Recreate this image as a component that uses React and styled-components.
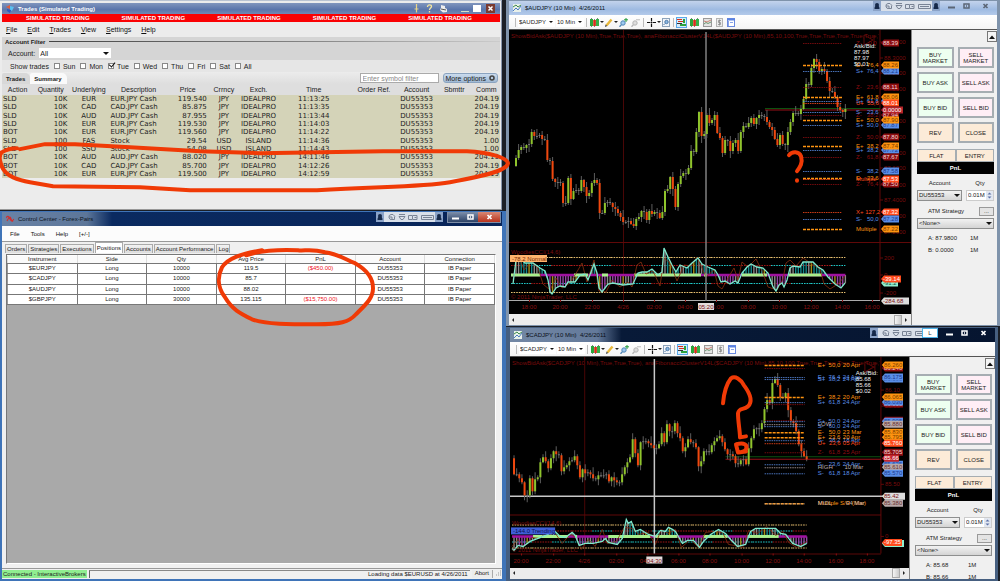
import React from 'react';
import styled, { createGlobalStyle, css } from 'styled-components';

const GlobalStyle = createGlobalStyle`
  * {
    box-sizing: border-box;
  }

  body {
    margin: 0;
    background: #1b1f26;
    font-family: 'Liberation Sans', Arial, sans-serif;
    font-size: 6px;
    color: #222;
  }

  button, input, select {
    font: inherit;
    color: inherit;
    margin: 0;
  }
`;

/* ---------- data ---------- */

const tradeColumns = [
  { name: 'Action', width: 31, align: 'left' },
  { name: 'Quantity', width: 35, align: 'right' },
  { name: 'Underlying', width: 41, align: 'center' },
  { name: 'Description', width: 58, align: 'left' },
  { name: 'Price', width: 40, align: 'right' },
  { name: 'Crrncy', width: 32, align: 'center' },
  { name: 'Exch.', width: 37, align: 'center' },
  { name: 'Time', width: 73, align: 'center' },
  { name: 'Order Ref.', width: 47, align: 'center' },
  { name: 'Account', width: 38, align: 'center' },
  { name: 'Sbmttr', width: 37, align: 'center' },
  { name: 'Comm', width: 27, align: 'right' },
];

const trades = [
  ['SLD', '10K', 'EUR', 'EUR.JPY Cash', '119.540', 'JPY', 'IDEALPRO', '11:13:25', '204.19'],
  ['SLD', '10K', 'CAD', 'CAD.JPY Cash', '85.875', 'JPY', 'IDEALPRO', '11:13:35', '204.19'],
  ['SLD', '10K', 'AUD', 'AUD.JPY Cash', '87.955', 'JPY', 'IDEALPRO', '11:13:44', '204.19'],
  ['SLD', '10K', 'EUR', 'EUR.JPY Cash', '119.530', 'JPY', 'IDEALPRO', '11:14:03', '204.19'],
  ['BOT', '10K', 'EUR', 'EUR.JPY Cash', '119.560', 'JPY', 'IDEALPRO', '11:14:22', '204.19'],
  ['SLD', '100', 'FAS', 'Stock', '29.54', 'USD', 'ISLAND', '11:14:36', '1.00'],
  ['SLD', '100', 'SSO', 'Stock', '54.08', 'USD', 'ISLAND', '11:14:43', '1.00'],
  ['BOT', '10K', 'AUD', 'AUD.JPY Cash', '88.020', 'JPY', 'IDEALPRO', '14:11:46', '204.19'],
  ['BOT', '10K', 'CAD', 'CAD.JPY Cash', '85.700', 'JPY', 'IDEALPRO', '14:12:26', '204.19'],
  ['BOT', '10K', 'EUR', 'EUR.JPY Cash', '119.500', 'JPY', 'IDEALPRO', '14:12:59', '204.19'],
];

const positions = [
  ['$EURJPY', 'Long', '10000', '119.5', '($450.00)', 'DU55353', 'IB Paper'],
  ['$CADJPY', 'Long', '10000', '85.7', '', 'DU55353', 'IB Paper'],
  ['$AUDJPY', 'Long', '10000', '88.02', '', 'DU55353', 'IB Paper'],
  ['$GBPJPY', 'Long', '30000', '135.115', '($15,750.00)', 'DU55353', 'IB Paper'],
];

const ORANGE = '#ff9410';
const BLUE = '#5b8fe8';
const DARK = '#8c0d10';
const RED = '#ff4a1c';
const GREY = '#b9a9a9';

const audChart = {
  symbol: '$AUDJPY',
  box: [509, 30, 402, 284],
  title: 'ShowBidAsk($AUDJPY (10 Min),True,True,True), anaFibonacciClusterV14L($AUDJPY (10 Min),85,10,100,True,True,True,True,True,True,Tru',
  start: 516,
  step: 2.614,
  open: 166,
  closes: [
    158, 150, 147, 148, 145, 144, 132, 136, 136, 135, 139, 140, 160, 161, 179, 182, 182, 183, 203, 203,
    178, 199, 191, 190, 191, 180, 187, 196, 193, 183, 180, 183, 213, 213, 203, 202, 203, 207, 209, 213,
    217, 222, 222, 221, 224, 226, 219, 217, 211, 212, 220, 211, 214, 212, 213, 218, 212, 191, 189, 177,
    189, 207, 184, 176, 173, 174, 168, 151, 152, 132, 112, 136, 134, 115, 123, 120, 115, 133, 138, 153,
    140, 141, 151, 143, 140, 151, 132, 126, 127, 123, 118, 124, 118, 115, 116, 117, 122, 127, 130, 139,
    145, 135, 144, 145, 132, 122, 113, 113, 114, 109, 99, 84, 85, 68, 59, 62, 71, 69, 71, 81, 91, 92, 97,
    107, 110, 112, 109,
  ],
  dayLine: 623,
  split: 242,
  bottom: 300,
  bottomColor: '#aaa',
  cross: { x: 706, y1: 32, y2: 301, color: '#808080', tag: '05:20' },
  tick: 306,
  times: [
    [529, '18:00'], [560, '20:00'], [592, '22:00'], [623, '4/26'], [654, '02:00'], [685, '04:00'],
    [716, '06:00'], [748, '08:00'], [779, '10:00'], [811, '12:00'], [842, '14:00'], [872, '16:00'],
  ],
  axis: [
    [42, '88.4000'], [58, '88.3000'], [73, '88.2000'], [89, '88.1000'], [121, '87.9000'], [137, '87.8000'],
    [153, '87.7000'], [168, '87.6000'], [185, '87.5000'], [200, '87.4000'], [216, '87.3000'],
    [232, '87.2000'], [258, '200'], [275, '0'], [293, '-200'],
  ],
  market: { x: 765, ask: 108, bid: 110 },
  dash: [803, 842],
  labelX: 856,
  levels: [
    [43, DARK, 'Z-    0,0', '', '88.39'],
    [71, BLUE, 'S+  76,4', '', '88.21'],
    [65, ORANGE, 'E+  76,4', '', '88.26'],
    [87, DARK, 'Z-   23,6', '', '88.11'],
    [101, BLUE, 'S+  61,8', '', '88.03'],
    [97, ORANGE, 'E+  61,8', '', '88.06'],
    [103, RED, 'U+  55,6', '', '88.01'],
    [115, DARK, 'Z-   38,2', '', '87.94'],
    [112, BLUE, 'S-   23,6', '', ''],
    [125, BLUE, 'S+  50,0', '', '87.87'],
    [120, ORANGE, 'E+  50,0', '', '87.90'],
    [137, DARK, 'Z-   50,0', '', '87.80'],
    [150, BLUE, 'S+  38,2', '', '87.72'],
    [146, ORANGE, 'E+  38,2', '', '87.74'],
    [157, DARK, 'Z-   61,8', '', '87.67'],
    [171, BLUE, 'S-   38,2', '', '87.58'],
    [184, DARK, 'Z-   76,4', '', '87.50'],
    [178, ORANGE, 'E-   23,6', '', ''],
    [179, RED, 'Multiple', '', '87.53'],
    [212, RED, 'X+ 127,2', '', '87.32'],
    [219, BLUE, 'S-   50,0', '', '87.28'],
    [229, ORANGE, 'Multiple', '', '87.22'],
  ],
  quote: { x: 854, y: 46, rows: ['Ask/Bid:', '87.98', '87.97', '$0.01'] },
  tags: [
    [110, '0.0000', '#b5222a', '#fff', 19],
    [283, '-91.2', '#8ff0d0', '#145040', 14],
    [279, '-39.14', RED, '#fff', 17],
    [301, '-284.68', '#ddd', '#7a1010', 25],
  ],
  cci: {
    name: 'WoodiesCCI(14,6)',
    nameY: 254,
    badge: ['-78.2 Normal', 255, '#ffb46e', '#7a2a00', 37],
    copyY: 299,
    mid: 275,
    rows: [257, 265, 283, 292],
    line: [
      [513, 284], [516, 260], [519, 257], [525, 263], [533, 263], [540, 268], [545, 271], [548, 280], [550, 292],
      [552, 294], [556, 288], [560, 286], [565, 287], [568, 282], [575, 282], [580, 275], [585, 274], [588, 280],
      [594, 264], [597, 273], [599, 288], [602, 292], [605, 288], [608, 284], [613, 283], [623, 285], [633, 284],
      [638, 273], [642, 272], [647, 272], [652, 269], [658, 275], [662, 272], [664, 248], [668, 257], [672, 265],
      [676, 272], [680, 265], [687, 268], [692, 263], [698, 258], [702, 264], [708, 267], [715, 270], [718, 275],
      [721, 282], [725, 281], [730, 284], [735, 281], [738, 283], [742, 273], [747, 267], [751, 264], [757, 267],
      [763, 268], [768, 273], [773, 287], [776, 291], [779, 285], [782, 283], [784, 287], [787, 280], [790, 268],
      [793, 266], [800, 267], [803, 262], [808, 262], [813, 262], [818, 267], [823, 270], [828, 277], [835, 284],
      [841, 288], [845, 283],
    ],
    fast: [
      [513, 280], [518, 254], [524, 270], [531, 262], [538, 268], [543, 284], [550, 290], [556, 278], [562, 288],
      [570, 283], [578, 270], [582, 263], [587, 282], [594, 260], [599, 291], [606, 292], [612, 280], [620, 287],
      [628, 282], [632, 287], [637, 265], [641, 262], [646, 274], [653, 271], [660, 286], [664, 258], [670, 263],
      [677, 281], [684, 265], [691, 266], [697, 257], [706, 277], [714, 270], [718, 286], [722, 289], [728, 278],
      [734, 268], [738, 280], [742, 262], [748, 267], [756, 259], [763, 273], [768, 287], [777, 290], [783, 279],
      [786, 263], [790, 260], [796, 266], [803, 258], [812, 264], [820, 269], [824, 284], [830, 289], [838, 284],
      [845, 276],
    ],
    bands: [[511, 540], [574, 588], [602, 608], [634, 701], [704, 707], [742, 767], [789, 822]],
  },
};

const cadChart = {
  symbol: '$CADJPY',
  box: [510, 356, 398, 210],
  title: 'ShowBidAsk($CADJPY (10 Min),True,True,True), anaFibonacciClusterV14L($CADJPY (10 Min),85,10,100,True,True,True,True,True,True,Tru',
  start: 514,
  step: 2.63,
  open: 457,
  closes: [
    473, 473, 477, 481, 494, 494, 477, 490, 478, 476, 461, 456, 460, 467, 457, 450, 453, 454, 470, 466, 464,
    460, 459, 455, 464, 476, 468, 472, 471, 473, 477, 478, 474, 475, 474, 473, 480, 476, 479, 481, 481, 473,
    466, 461, 456, 438, 452, 464, 441, 440, 440, 442, 444, 447, 447, 443, 432, 441, 423, 430, 430, 422, 432,
    437, 450, 446, 438, 441, 442, 446, 465, 460, 450, 450, 451, 444, 440, 437, 435, 441, 448, 453, 453, 455,
    462, 463, 459, 458, 463, 447, 437, 428, 427, 428, 422, 408, 399, 402, 382, 378, 384, 396, 396, 392, 409,
    420, 422, 430, 443, 450, 455, 458,
  ],
  dayLine: 584,
  split: 513,
  bottom: 552,
  bottomColor: '#5a0808',
  cross: { x: 654, y1: 358, y2: 552, color: '#c8c8c8', tag: '04:30', h: 495 },
  tick: 558,
  times: [
    [521, '20:00'], [553, '22:00'], [584, '4/26'], [616, '02:00'], [647, '04:00'], [678, '06:00'],
    [709, '08:00'], [741, '10:00'], [772, '12:00'], [803, '14:00'], [835, '16:00'], [866, '18:00'],
  ],
  axis: [[389, '86.10'], [405, '86.00'], [483, '85.50'], [535, '0']],
  market: { x: 725, ask: 455, bid: 458 },
  dash: [764, 804],
  labelX: 817,
  levels: [
    [367, DARK, '', '', '86.240'],
    [364, ORANGE, 'E+  50,0', '20 Apr', '86.260'],
    [378, BLUE, 'S+  38,2', '24 Apr', '86.190'],
    [376, BLUE, 'E+  76,4', '24 Apr', '86.175'],
    [403, DARK, '', '', '86.010'],
    [401, BLUE, 'S+  61,8', '24 Apr', '86.030'],
    [396, ORANGE, 'E+  38,2', '20 Apr', '86.065'],
    [419, DARK, '', '', '85.925'],
    [420, BLUE, 'S+  50,0', '24 Apr', '85.905'],
    [425, BLUE, 'S-   60,0', '24 Apr', ''],
    [423, GREY, 'LOW', '', '85.880'],
    [431, ORANGE, 'E-   50,0', '23 Mar', '85.830'],
    [439, BLUE, 'S-   38,2', '18 Apr', ''],
    [436, ORANGE, 'E+  23,6', '20 Apr', '85.795'],
    [442, RED, 'U+  23,6', '05 Apr', '85.760'],
    [451, DARK, 'Z-   61,8', '25 Apr', '85.705'],
    [463, BLUE, 'S-   23,6', '24 Apr', '85.625'],
    [466, GREY, 'HIGH', ' 10 Mar', '85.610'],
    [472, BLUE, 'S-   61,8', '18 Apr', '85.570'],
    [502, ORANGE, 'Multiple S/R (Mar)', '', ''],
    [502, GREY, 'MIDL', '  04 Mar', '85.380'],
  ],
  quote: { x: 855, y: 372, rows: ['Ask/Bid:', '85.68', '85.66', '$0.02'] },
  tags: [
    [457, '85.66', '#c4262e', '#fff', 14],
    [495, '85.42', '#ddd', '#7a1010', 20],
    [542, '', '#8ff0d0', '#145040', 19],
    [541, '-97.35', RED, '#fff', 17],
  ],
  cci: {
    name: 'WoodiesCCI(14,6)',
    nameY: 524,
    badge: ['-144.0 Trending', 526, '#3f5fd8', '#0a0f50', 44],
    copyY: 551,
    mid: 535,
    rows: [523, 529, 540, 546],
    line: [
      [512, 547], [514, 549], [518, 544], [523, 545], [530, 540], [538, 537], [555, 530], [560, 535], [565, 536],
      [572, 531], [575, 534], [579, 544], [585, 542], [593, 542], [602, 540], [605, 537], [608, 541], [617, 543],
      [622, 537], [626, 518], [628, 522], [631, 520], [635, 530], [640, 528], [648, 533], [655, 535], [660, 529],
      [665, 530], [668, 526], [672, 528], [675, 530], [682, 542], [687, 539], [693, 539], [699, 546], [703, 540],
      [710, 533], [718, 528], [725, 532], [730, 538], [737, 545], [745, 543], [750, 530], [755, 527], [760, 527],
      [770, 527], [775, 527], [780, 532], [785, 533], [788, 537], [792, 542], [797, 544], [800, 545], [806, 542],
    ],
    fast: [
      [512, 545], [518, 538], [524, 545], [532, 536], [540, 537], [548, 529], [556, 533], [562, 542], [570, 533],
      [576, 536], [581, 548], [588, 538], [595, 545], [602, 528], [607, 542], [616, 540], [624, 526], [632, 527],
      [638, 533], [648, 531], [655, 543], [661, 528], [668, 532], [675, 528], [681, 546], [690, 538], [698, 546],
      [705, 531], [713, 530], [722, 531], [728, 543], [734, 544], [742, 546], [748, 529], [757, 532], [766, 525],
      [775, 534], [782, 530], [788, 541], [796, 546], [806, 540],
    ],
    bands: [[533, 568], [575, 577], [608, 650], [655, 677], [703, 727], [747, 778]],
  },
};

/* ---------- layout ---------- */

const Desktop = styled.div`
  position: relative;
  display: grid;
  grid-template-columns: 506fr 494fr;
  min-height: 100vh;
  overflow: hidden;
`;

const Column = styled.div`
  display: flex;
  flex-direction: column;
  gap: 1px;
  min-width: 0;
`;

const TitleBar = styled.header`
  display: flex;
  align-items: center;
  gap: 4px;
  flex: none;
  height: ${({ $height }) => $height || 14}px;
  padding: 0 ${({ $right }) => $right || 4}px 0 4px;
  white-space: nowrap;
  ${({ $tone }) => $tone === 'slate' && css`
    color: #fff;
    font-weight: bold;
    background: linear-gradient(#8095bd, #5a75ab 60%, #7188b4);
  `}
  ${({ $tone }) => $tone === 'navy' && css`
    color: #0c1420;
    background: linear-gradient(90deg, #6a83a6 0, #5c7699 17%, #0a2a60 22%, #082458 100%);
  `}
  ${({ $tone }) => $tone === 'night' && css`
    color: #0a0f18;
    background: linear-gradient(90deg, #7388a5 0, #63799a 18%, #081a38 23%, #061530 100%);
  `}
  ${({ $tone }) => $tone === 'light' && css`
    color: #0c1420;
    background: linear-gradient(#c3d3ec, #9fbbe2 60%, #b3caea);
  `}
`;

const TitleText = styled.h1`
  flex: 1;
  margin: 0;
  font-size: 6px;
  font-weight: inherit;
`;

const WindowButtons = styled.div`
  display: flex;
  align-self: flex-start;
  border: ${({ $flat }) => ($flat ? 'none' : '1px solid #7d8da6')};
  border-top: 0;
`;

const WindowButton = styled.button`
  display: flex;
  align-items: center;
  justify-content: center;
  width: ${({ $wide }) => ($wide ? 22 : 15)}px;
  height: 10px;
  padding: 0;
  border: 0;
  color: ${({ $dark }) => ($dark ? '#5b6676' : '#fff')};
  background: ${({ $red, $plain }) => ($red ? 'linear-gradient(#d98874, #b8321c)' : $plain ? 'transparent' : 'linear-gradient(#7d8fab, #2c4266)')};
`;

const Language = styled.span`
  align-self: flex-start;
  width: 16px;
  height: 10px;
  margin-left: -19px;
  border: 1px solid #4fb4e8;
  line-height: 8px;
  text-align: center;
  color: #333;
  background: #fff;
`;

const IconButton = styled.button`
  display: flex;
  align-items: center;
  padding: 0;
  border: 1px solid ${({ $on }) => ($on ? '#5aa9ea' : 'transparent')};
  background: ${({ $on }) => ($on ? '#d8ecfb' : 'none')};
`;

const MenuBar = styled.nav`
  display: flex;
  align-items: center;
  gap: ${({ $gap }) => $gap}px;
  height: 15px;
  padding: 0 ${({ $left }) => $left}px;
  font-size: ${({ $size }) => $size || 6}px;
  background: ${({ $bg }) => $bg};
`;

const MenuItem = styled.a`
  color: #111;
  text-decoration: none;

  &::first-letter {
    text-decoration: ${({ $key }) => ($key ? 'underline' : 'none')};
  }
`;

/* trades window */

const TradesFrame = styled.section`
  margin-right: 4px;
  padding: 2px 1px 31px 2px;
  background: #ececec;
  border-top: 1px solid #b9c3d2;
  border-right: 1px solid #8a97ac;
  border-bottom: 1px solid #999;
`;

const Ticker = styled.div`
  display: flex;
  height: 8px;
  padding-left: 24px;
  gap: 32px;
  overflow: hidden;
  color: #fff;
  background: #fa0204;
  font-weight: bold;
  line-height: 9px;
  white-space: nowrap;

  span {
    flex: none;
  }
`;

const Filter = styled.fieldset`
  margin: 0;
  padding: 0;
  border: 0;
  background: #d5d5d5;
`;

const FilterTitle = styled.div`
  display: flex;
  align-items: center;
  gap: 4px;
  padding-left: 3px;
  height: 9px;
  font-weight: bold;

  &::after {
    content: '';
    flex: 1;
    height: 1px;
    background: linear-gradient(90deg, #444, #888 60%, #ccc);
  }
`;

const FilterRow = styled.div`
  display: flex;
  align-items: center;
  gap: ${({ $gap }) => $gap}px;
  height: ${({ $height }) => $height}px;
  padding-left: ${({ $left }) => $left}px;
  font-size: 7px;
  background: ${({ $bg }) => $bg || 'none'};
`;

const SelectBox = styled.span`
  position: relative;
  display: inline-flex;
  flex: ${({ $grow }) => ($grow ? '1 1 0' : 'none')};
  min-width: 0;

  &::after {
    content: '';
    position: absolute;
    right: 2px;
    top: 50%;
    margin-top: -1px;
    border: ${({ $small }) => ($small ? 2 : 3)}px solid transparent;
    border-top-color: #111;
    border-bottom: 0;
    pointer-events: none;
  }
`;

const Select = styled.select`
  appearance: none;
  width: ${({ $width }) => ($width ? `${$width}px` : '100%')};
  height: ${({ $height }) => $height || 10}px;
  padding: 0 8px 0 1px;
  border: ${({ $plain }) => ($plain ? '0' : '1px solid #8e8f8f')};
  border-radius: 0;
  background: ${({ $plain }) => ($plain ? '#fff' : 'linear-gradient(#f2f2f2, #d4d4d4)')};
`;

const Day = styled.label`
  display: flex;
  align-items: center;
  gap: 3px;
`;

const Check = styled.input`
  appearance: none;
  position: relative;
  width: 6px;
  height: 6px;
  border: 1px solid #888;
  background: #fff;

  &:checked::after {
    content: '';
    position: absolute;
    left: 1px;
    bottom: 1px;
    width: 3px;
    height: 5px;
    border: solid #111;
    border-width: 0 1px 1px 0;
    transform: rotate(40deg);
  }
`;

const TradeTabs = styled.div`
  display: flex;
  align-items: flex-end;
  height: 12px;
  padding-right: 2px;
  background: linear-gradient(#ececec, #dedede);
`;

const TradeTab = styled.button`
  height: 11px;
  padding: 0 5px 0 4px;
  border: 0;
  border-radius: 2px 5px 0 0;
  font-weight: bold;
  background: ${({ $active }) => ($active ? '#d8d8d8' : '#fafafa')};
`;

const TabTools = styled.div`
  display: flex;
  align-items: center;
  gap: 4px;
  margin-left: auto;
  height: 12px;
`;

const SymbolFilter = styled.input`
  width: 79px;
  height: 10px;
  padding: 0 2px;
  border: 1px solid #aaa;
  background: #fff;
  font-size: 7px;

  &::placeholder {
    color: #8a8a8a;
  }
`;

const MoreButton = styled.button`
  display: flex;
  align-items: center;
  gap: 3px;
  height: 10px;
  padding: 0 2px;
  border: 1px solid #8aa3bf;
  border-radius: 3px;
  font-size: 7px;
  background: linear-gradient(#cbdcee, #9fb9d4);
`;

const TradeTable = styled.table`
  width: 100%;
  height: 94px;
  border-collapse: collapse;
  table-layout: fixed;
  font-family: 'DejaVu Sans', Verdana, sans-serif;
  font-size: 7px;
  line-height: 8px;
  white-space: nowrap;

  th {
    height: 11px;
    padding: 0;
    font-family: 'Liberation Sans', Arial, sans-serif;
    font-weight: normal;
    background: #dedede;
  }

  tbody {
    background: #d4d3b8;
  }
`;

const Col = styled.col`
  width: ${({ $width }) => $width}px;
`;

const TradeCell = styled.td`
  padding: 0 1px;
  text-align: ${({ $align }) => $align};
`;

/* control center */

const ControlFrame = styled.section`
  flex: 1;
  display: flex;
  flex-direction: column;
  border: solid #3f74b8;
  border-width: 1px 4px 3px 2px;
  background: #f0f0f0;
`;

const PageTabs = styled.div`
  display: flex;
  align-items: flex-end;
  gap: 1px;
  height: 12px;
  padding-left: 3px;
  border-top: 1px solid #999;
`;

const PageTab = styled.button`
  height: ${({ $active }) => ($active ? 11 : 9)}px;
  padding: 0 1px;
  border: 1px solid #aaa;
  border-bottom: 0;
  background: ${({ $active }) => ($active ? '#fff' : 'linear-gradient(#f2f2f2, #dcdcdc)')};
`;

const GridArea = styled.div`
  flex: 1;
  margin: 1px 6px 4px 4px;
  border: 1px solid #777;
  border-right-color: #fff;
  border-bottom-color: #fff;
  background: #a9a9a9;
`;

const PositionTable = styled.table`
  width: 100%;
  height: 50px;
  border-collapse: collapse;
  table-layout: fixed;
  line-height: 7px;
  text-align: center;
  background: #fff;

  th, td {
    padding: 0;
    font-weight: normal;
    border: 1px solid #777;
    border-left-color: #999;
  }

  th {
    border-color: #fff #ddd #777;
    background: #fafafa;
  }
`;

const Pnl = styled.td`
  color: #f0141e;
`;

const StatusBar = styled.footer`
  display: flex;
  align-items: center;
  gap: 2px;
  height: 11px;
  padding: 1px 0;
  border-top: 1px solid #999;
`;

const Connected = styled.span`
  padding: 0 1px;
  line-height: 8px;
  background: #90ee90;
`;

const Loading = styled.span`
  flex: 1;
  padding-right: 2px;
  border-left: 1px solid #666;
  border-top: 1px solid #888;
  line-height: 7px;
  text-align: right;
`;

const AbortButton = styled.button`
  height: 8px;
  padding: 0 3px;
  border: 0;
  border-right: 1px solid #aaa;
  line-height: 7px;
  background: #ececec;
`;

/* chart windows */

const ChartFrame = styled.section`
  display: flex;
  flex-direction: column;
  flex: ${({ $fill }) => ($fill ? 1 : 'none')};
  margin-right: ${({ $fill }) => ($fill ? 2 : 0)}px;
  border: solid ${({ $fill }) => ($fill ? '#465f80' : '#7f93ab')};
  border-width: 1px 3px ${({ $fill }) => ($fill ? 3 : 1)}px ${({ $fill }) => ($fill ? 4 : 3)}px;
  background: #f0f0f0;
`;

const Toolbar = styled.div`
  display: flex;
  align-items: center;
  flex: none;
  gap: 1px;
  height: 15px;
  padding-left: 5px;
  border-bottom: 1px solid #555;
  background: linear-gradient(#fff, #f4f4f4);

  ${Select} {
    height: 9px;
    padding-right: 8px;
  }
`;

const ToolGroup = styled.div`
  display: flex;
  gap: 2px;
`;

const Divider = styled.span`
  width: 1px;
  height: 9px;
  margin: 0 1px;
  background: #bbb;
`;

const Caret = styled.span`
  margin: 0 -1px;
  border: 2px solid transparent;
  border-top-color: #222;
  border-bottom: 0;
`;

const ChartBody = styled.div`
  display: flex;
  flex: 1;
`;

const ChartMain = styled.div`
  flex: 1;
  min-width: 0;
  display: flex;
  flex-direction: column;
`;

const Plot = styled.svg`
  display: block;
  width: 100%;
  height: auto;
  background: #000;
  font-family: 'Liberation Sans', Arial, sans-serif;
  font-size: 6px;
`;

const ScrollTrack = styled.div`
  display: flex;
  align-items: center;
  justify-content: space-between;
  height: 11px;
  padding: 0 4px 0 3px;
  background: #ececec;
`;

const Thumb = styled.span`
  width: 8px;
  height: 10px;
  margin: 0 3px 0 auto;
  border: 1px solid #aaa;
  background: linear-gradient(90deg, #f4f4f4, #ccc);
`;

const Arrow = styled.span`
  border: 2px solid transparent;
  border-${({ $dir }) => ($dir === 'left' ? 'right' : 'left')}: 2px solid #222;
  border-${({ $dir }) => $dir}: 0;
`;

const OrderPanel = styled.aside`
  contain: size;
  flex: none;
  width: 86px;
  padding: 1px 3px 0 5px;
  overflow: hidden;
  background: #f0f0f0;
  border-left: 1px solid #888;
`;

const CollapseButton = styled.button`
  display: flex;
  align-items: center;
  justify-content: center;
  width: 10px;
  height: 11px;
  margin: 0 -3px 5px auto;
  padding: 0;
  border: 1px solid #777;
  background: #f4f4f4;
`;

const OrderButtons = styled.div`
  display: grid;
  grid-template-columns: 1fr 1fr;
  gap: 4px;
`;

const tints = {
  buy: '#edfff0',
  sell: '#ffeef6',
  exit: '#fcebd8',
};

const OrderButton = styled.button`
  height: ${({ $low }) => ($low ? 13 : 21)}px;
  padding: 0 1px;
  border: ${({ $low }) => ($low ? 1 : 2)}px solid #a6adb2;
  line-height: 6px;
  background: ${({ $tint }) => tints[$tint]};
`;

const ExitRow = styled.div`
  display: grid;
  grid-template-columns: 1fr 1fr;
  margin-top: 6px;
`;

const PnlBar = styled.div`
  height: 12px;
  color: #fff;
  background: #000;
  font-weight: bold;
  line-height: 12px;
  text-align: center;
`;

const FieldRow = styled.div`
  display: flex;
  align-items: center;
  gap: 4px;
  height: 12px;
  margin-top: ${({ $top }) => $top || 0}px;
`;

const FieldLabel = styled.label`
  flex: ${({ $flex }) => $flex};
  text-align: center;
`;

const QtyBox = styled.span`
  position: relative;
  display: flex;

  svg {
    position: absolute;
    right: 1px;
    top: 1px;
  }
`;

const Qty = styled.input`
  width: 28px;
  height: 11px;
  padding: 0 1px;
  border: 1px solid #ccc;
  background: #fff;
`;

const DotsButton = styled.button`
  width: 15px;
  height: 9px;
  padding: 0;
  border: 1px solid #999;
  line-height: 5px;
  background: #e4e4e4;
`;

const Quotes = styled.dl`
  display: grid;
  grid-template-columns: 42px 1fr;
  row-gap: 5px;
  margin: 6px 0 0;
  padding-left: 11px;
  line-height: 7px;

  dt, dd {
    margin: 0;
  }
`;

const Marker = styled.svg`
  position: absolute;
  inset: 0;
  width: 100%;
  height: 100%;
  fill: none;
  stroke: #f03a06;
  stroke-width: 4;
  stroke-linecap: round;
  stroke-linejoin: round;
  pointer-events: none;
`;

/* ---------- icons ---------- */

const MinIcon = () => (
  <svg width="9" height="8" viewBox="0 0 9 8"><path d="M1 5.500h7" stroke="currentColor" strokeWidth="2" /></svg>
);

const MaxIcon = () => (
  <svg width="9" height="8" viewBox="0 0 9 8"><path d="M2 2h5v4H2zM4 4h1" fill="none" stroke="currentColor" strokeWidth="1.5" /></svg>
);

const CloseIcon = () => (
  <svg width="9" height="8" viewBox="0 0 9 8"><path d="M2.500 2l4 4M6.500 2l-4 4" stroke="currentColor" strokeWidth="1.700" /></svg>
);

const StripSvg = styled.svg`
  align-self: flex-start;
  flex: none;
`;

const PenStrip = () => (
  <StripSvg width="67" height="10" viewBox="0 0 67 10" fill="none" stroke="#788395" strokeWidth="1">
    <rect width="67" height="10" fill="#d9e0ea" stroke="none" />
    <rect width="8" height="10" fill="#8ba3c8" stroke="none" />
    <rect x="59" width="8" height="10" fill="#8ba3c8" stroke="none" />
    <path d="M1.500 8c0-3 1-3.500 2.500-3.500s2.500.5 2.500 3.500zM60.500 8c0-3 1-3.500 2.500-3.500s2.500.5 2.500 3.500z" fill="#15294a" stroke="none" />
    <circle cx="4" cy="4" r="2" fill="#15294a" stroke="none" />
    <circle cx="63" cy="4" r="2" fill="#15294a" stroke="none" />
    <path d="M15 2.500a2.500 2.500 0 1 0 1 5h2.500v-3M13 5h3v2M15 2.500h2l2 2M23 2.500h6M23 4.500h6l-2 3h-2zM32.500 3.500h4v4h-4zM37 3.500h4v4h-4M38.500 5.500h2M45.500 3.500h12v4h-12zM47 5.500h9" />
  </StripSvg>
);

const AppIcon = ({ chart }) => (
  <svg width="8" height="8" viewBox="0 0 8 8" fill="none">
    {chart ? (
      <>
        <rect width="8" height="8" fill="#e8f0ea" />
        <path d="M0 3l3-2 2 2 3-2" stroke="#3f8a4a" />
        <path d="M0 7l3-3 2 2 3-4" stroke="#4a7ac0" />
      </>
    ) : (
      <path d="M0 3c2-3 3-1 4 1s2 3 4 0M1 6c1-2 2-4 3-4s1 5 3 4" stroke="#d03030" strokeWidth="1.200" />
    )}
  </svg>
);

const GlobeIcon = () => (
  <svg width="8" height="8" viewBox="0 0 8 8">
    <path d="M0 2l4-2v4z" fill="#e05a3a" />
    <path d="M4 1l4 1-2 4-2-1z" fill="#58c0f0" />
    <path d="M1 4l4 1-1 3-3-2z" fill="#2b58c0" />
  </svg>
);

const PinIcon = () => (
  <svg width="7" height="9" viewBox="0 0 7 9"><path d="M3.500 0v5M1.500 5h4M3.500 5v3.500" stroke="#e8d48a" strokeWidth="1.200" /></svg>
);

const HelpIcon = () => (
  <svg width="7" height="9" viewBox="0 0 7 9"><path d="M1.500 3c0-3 4-2.500 4-.5 0 1.500-2 1.500-2 3.500M3.500 7v1.500" fill="none" stroke="#f4e6a0" strokeWidth="1.300" /></svg>
);

const PrintIcon = () => (
  <svg width="9" height="9" viewBox="0 0 9 9"><path d="M2 1l4 1v2l2 1v3l-4 .5L1 6l1-2z" fill="#eee" /><path d="M2 5l5 1" stroke="#555" /></svg>
);

const CandlesIcon = () => (
  <svg width="9" height="9" viewBox="0 0 9 9">
    <path d="M1.500 0v9M4.500 1v8M7.500 0v8" stroke="#333" strokeWidth=".6" />
    <rect y="1" width="3" height="7" fill="#2aa63a" />
    <rect x="3.200" y="2" width="2.700" height="6" fill="#d8301c" />
    <rect x="6" y="1" width="3" height="7" fill="#36b048" />
  </svg>
);

const PencilIcon = () => (
  <svg width="8" height="9" viewBox="0 0 8 9"><path d="M1.500 7.500l5-6" stroke="#e8b83a" strokeWidth="2.400" /><path d="M0 9l.6-2.500 1.600 1.400z" fill="#333" /></svg>
);

const LensIcon = ({ off }) => (
  <svg width="9" height="9" viewBox="0 0 9 9" fill="none">
    <circle cx="4" cy="5" r="2.200" fill={off ? '#ddd' : '#9cc8ee'} stroke={off ? '#b5b5b5' : '#4f86b8'} />
    <path d="M2.400 6.800L.5 8.800" stroke={off ? '#b5b5b5' : '#4f86b8'} strokeWidth="1.300" />
    <path d={off ? 'M5 1.800h4' : 'M5 1.800h4M7 0v4'} stroke={off ? '#bbb' : '#1e9a3a'} />
  </svg>
);

const CrossIcon = () => (
  <svg width="9" height="9" viewBox="0 0 9 9"><path d="M0 4.500h3.500M5.500 4.500H9M4.500 0v3.500M4.500 5.500V9M4 4.500h1" stroke="#111" strokeWidth="1.200" /></svg>
);

const PageLensIcon = () => (
  <svg width="8" height="9" viewBox="0 0 8 9" fill="none"><rect x=".5" y=".5" width="7" height="8" fill="#f2f5f9" stroke="#8da3bb" /><circle cx="4.500" cy="4" r="1.700" fill="#8dbbe4" stroke="#4f79a8" /><path d="M3 5.500L1.500 7" stroke="#4f79a8" /></svg>
);

const TraderIcon = () => (
  <svg width="9" height="9" viewBox="0 0 9 9"><path d="M0 1.500h5M1 3.500h5" stroke="#d8301c" /><path d="M0 5.500h5" stroke="#333" /><path d="M6 1h2v4H6zM3 6h6v2H3z" fill="#2ba33c" /></svg>
);

const AreaIcon = () => (
  <svg width="9" height="9" viewBox="0 0 9 9" fill="none"><rect x=".5" y=".5" width="8" height="8" fill="#e4e4e4" stroke="#9a9a9a" /><path d="M1 6l2-1.500 2 1L8 4" stroke="#6a9a72" /><path d="M1 3l3 1 4-2" stroke="#c86a5a" strokeWidth=".8" /></svg>
);

const DollarIcon = () => (
  <svg width="7" height="9" viewBox="0 0 7 9"><rect x=".5" y=".5" width="6" height="8" fill="#ececec" stroke="#b5b5b5" /><path d="M5 2.500H2.500v2h2v2H2M3.500 1.500v6" fill="none" stroke="#8c8c8c" strokeWidth=".8" /></svg>
);

const PanelIcon = () => (
  <svg width="8" height="9" viewBox="0 0 8 9"><rect x=".5" y=".5" width="7" height="8" fill="#fff" stroke="#6a8ae0" /><path d="M0 1.500h8" stroke="#5b82e0" strokeWidth="2" /><path d="M1.500 3v5M3 4.500h3" stroke="#8aa4e8" /></svg>
);

/* ---------- chart drawing ---------- */

const wicks = [3, 6, 2, 4, 1, 5, 3, 2, 7, 2, 4];

const Candles = ({ chart }) => chart.closes.map((close, i) => {
  const open = i ? chart.closes[i - 1] : chart.open;
  const x = chart.start + i * chart.step;
  const top = Math.min(open, close);
  const height = Math.abs(open - close);
  const color = height < 2 ? '#777' : close < open ? '#8fc42c' : '#f0480e';
  return (
    <g key={i}>
      <path d={`M${x} ${top - wicks[i % 11]}V${top + height + wicks[(i * 3 + 4) % 11]}`} stroke="#5e5e5e" />
      <rect x={x - 1} y={top} width="2" height={Math.max(height, 1)} fill={color} />
    </g>
  );
});

const levelAt = (points, x) => {
  const next = points.findIndex((p) => p[0] >= x);
  if (next < 1) return points[next === 0 ? 0 : points.length - 1][1];
  const [x0, y0] = points[next - 1];
  const [x1, y1] = points[next];
  return y0 + ((x - x0) / (x1 - x0)) * (y1 - y0);
};

const toPath = (points) => `M${points.map((p) => p.join(' ')).join('L')}`;

const outerDots = ['#e8c070', '#4f78e0', '#b026b0', '#e8c070', '#b026b0', '#4f78e0'];
const innerDots = ['#20c8c8', '#9c1515', '#20c8c8', '#b01c1c'];

const Woodies = ({ chart }) => {
  const { cci } = chart;
  const end = chart.start + (chart.closes.length - 1) * chart.step;
  const left = chart.box[0] + 2;
  const [label, badgeY, fill, color, width] = cci.badge;
  return (
    <g>
      {cci.rows.map((y, row) => {
        const colors = row === 0 || row === 3 ? outerDots : innerDots;
        const segments = Math.ceil((end - left) / 20);
        return Array.from({ length: segments }, (_, i) => (
          <path
            key={`${row}-${i}`}
            d={`M${left + i * 20} ${y + 0.5}H${Math.min(left + i * 20 + 20, end)}`}
            stroke={colors[(i * 2 + row + (i % 3)) % colors.length]}
            strokeDasharray="1.600 1"
          />
        ));
      })}
      {chart.closes.map((_, i) => {
        const x = chart.start + i * chart.step;
        const y = levelAt(cci.line, x);
        const up = y < cci.mid;
        const bar = i % 9 === 5 ? '#a39018' : i % 7 < 2 ? '#8a8a8a' : up ? '#12888c' : '#9444a4';
        return <path key={i} d={`M${x} ${cci.mid}V${y}`} stroke={bar} strokeWidth="1.400" />;
      })}
      <path d={`M${left} ${cci.mid}H${end}`} stroke="#a012a0" strokeWidth="2.500" />
      {cci.bands.map(([x1, x2]) => (
        <path key={x1} d={`M${x1} ${cci.mid}H${x2}`} stroke="#a8f08c" strokeWidth="3" />
      ))}
      <path d={toPath(cci.fast)} fill="none" stroke="#8a3010" strokeWidth=".8" />
      <path d={toPath(cci.line)} fill="none" stroke="#7fe8cc" strokeWidth="1.300" />
      <text x={left} y={cci.nameY} fill="#7c0c0c">{cci.name}</text>
      <rect x={left - 1} y={badgeY} width={width} height="7" fill={fill} />
      <text x={left + 1} y={badgeY + 6} fill={color}>{label}</text>
      <text x={left} y={cci.copyY} fill="#7c0c0c">© 2011 NinjaTrader, LLC</text>
    </g>
  );
};

const PriceTag = ({ y, text, fill, color, width = 16 }) => (
  <g>
    <path d={`M881 ${y}l3-3.500h${width}v7h-${width}z`} fill={fill} />
    <text x="883" y={y + 2} fill={color}>{text}</text>
  </g>
);

const tagInk = {
  [ORANGE]: '#7a3c00',
  [BLUE]: '#1c3a90',
  [DARK]: '#f4d8d8',
  [RED]: '#fff',
  [GREY]: '#6a3030',
};

const PriceChart = ({ chart }) => {
  const [x0, y0, w] = chart.box;
  const { cross, market, dash, quote } = chart;
  return (
    <Plot viewBox={chart.box.join(' ')} role="img" aria-label={`${chart.symbol} price chart`}>
      <svg x={x0} y={y0} width={879 - x0} height="12" viewBox={`${x0} ${y0} ${879 - x0} 12`}>
        <text x={x0 + 2} y={y0 + 8} fill="#780c0c">{chart.title}</text>
      </svg>
      <path d={`M${chart.dayLine}.5 ${y0}V${chart.bottom}`} stroke="#4a0606" />
      <path d={`M${x0} ${chart.split}.5H${cross.h ? 880 : x0 + w}M880 ${y0}V${chart.bottom}`} stroke="#600808" />
      <path d={`M${x0} ${chart.bottom}.5H880`} stroke={chart.bottomColor} />
      {chart.axis.map(([y, text]) => (
        <g key={text}>
          <path d={`M880 ${y}h3`} stroke="#600808" />
          <text x="884" y={y + 2} fill="#780c0c">{text}</text>
        </g>
      ))}
      {chart.times.map(([x, text]) => (
        <g key={text} fill="#8a1010">
          <rect x={x} y={chart.bottom} width="1" height="2" />
          <text x={x} y={chart.tick + 3} textAnchor="middle">{text}</text>
        </g>
      ))}
      <Woodies chart={chart} />
      <path d={`M${cross.x} ${cross.y1}V${cross.y2}`} stroke={cross.color} strokeWidth="1.500" />
      {cross.h && <path d={`M${x0} ${cross.h}H882`} stroke={cross.color} strokeWidth="1.500" />}
      <rect x={cross.x - 8} y={chart.tick - 3} width="16" height="7" fill="#e4dcdc" />
      <text x={cross.x} y={chart.tick + 3} fill="#7a1010" textAnchor="middle">{cross.tag}</text>
      <path d={`M${market.x} ${market.ask}.500H880`} stroke="#0c5210" />
      <path d={`M${market.x} ${market.bid}H880`} stroke="#9a1018" />
      <Candles chart={chart} />
      <path d={`M864 ${y0 + 5}v10l9-5zM874 ${y0 + 5}v10`} fill="none" stroke="#5c0808" />
      {chart.levels.map(([y, color, name, date, price], i) => (
        <g key={i}>
          <path
            d={`M${dash[0]} ${y + 0.5}H${dash[1]}`}
            stroke={color}
            strokeWidth={color === ORANGE ? 1.5 : 0.8}
            strokeDasharray={color === ORANGE ? '3 1' : '1.500 .8'}
          />
          <text x={chart.labelX} y={y + 2} fill={color} xmlSpace="preserve">{name}</text>
          <text x={chart.labelX + 25} y={y + 2} fill={color} xmlSpace="preserve">{date}</text>
          {price && <PriceTag y={y} text={price} fill={color} color={tagInk[color]} width={price.length > 5 ? 18 : 15} />}
        </g>
      ))}
      {chart.tags.map(([y, text, fill, color, width]) => (
        <PriceTag key={y} y={y} text={text} fill={fill} color={color} width={width} />
      ))}
      {quote.rows.map((row, i) => (
        <text key={row} x={quote.x} y={quote.y + i * 6 + 2} fill="#f2f2f2">{row}</text>
      ))}
    </Plot>
  );
};

/* ---------- windows ---------- */

const Controls = ({ plain, dark, red, wide, flat }) => (
  <WindowButtons $flat={flat}>
    <WindowButton $plain={plain} $dark={dark} aria-label="Minimize"><MinIcon /></WindowButton>
    <WindowButton $plain={plain} $dark={dark} aria-label="Maximize"><MaxIcon /></WindowButton>
    <WindowButton $plain={plain} $dark={dark} $red={red} $wide={wide} aria-label="Close"><CloseIcon /></WindowButton>
  </WindowButtons>
);

const TradesWindow = () => (
  <TradesFrame>
    <TitleBar $tone="slate" $height={11}>
      <GlobeIcon />
      <TitleText>Trades (Simulated Trading)</TitleText>
      <IconButton aria-label="Pin"><PinIcon /></IconButton>
      <IconButton aria-label="Help"><HelpIcon /></IconButton>
      <IconButton aria-label="Print"><PrintIcon /></IconButton>
      <svg width="43" height="9" viewBox="0 0 43 9">
        <path d="M8 7.500h8" stroke="#d8dfc8" />
        <rect x="20" y="1" width="8" height="7" fill="#fff" />
        <rect x="33" width="9" height="9" fill="#7a3a30" />
        <path d="M35.500 2.500l4 4M39.500 2.500l-4 4" stroke="#fff" strokeWidth="1.500" />
      </svg>
    </TitleBar>
    <Ticker>
      {[1, 2, 3, 4, 5].map((n) => <span key={n}>SIMULATED TRADING</span>)}
    </Ticker>
    <MenuBar $gap={10} $left={4} $size={7} $bg="#ececec">
      {['File', 'Edit', 'Trades', 'View', 'Settings', 'Help'].map((item) => (
        <MenuItem key={item} href="#" $key>{item}</MenuItem>
      ))}
    </MenuBar>
    <Filter>
      <FilterTitle>Account Filter</FilterTitle>
      <FilterRow $gap={4} $left={6} $height={14}>
        <label htmlFor="account-filter">Account:</label>
        <SelectBox>
          <Select id="account-filter" $plain $width={72}><option>All</option></Select>
        </SelectBox>
      </FilterRow>
    </Filter>
    <FilterRow $gap={5} $left={8} $height={12} $bg="#e6e6e6">
      <span>Show trades</span>
      {['Sun', 'Mon', 'Tue', 'Wed', 'Thu', 'Fri', 'Sat', 'All'].map((day) => (
        <Day key={day}><Check type="checkbox" defaultChecked={day === 'Tue'} />{day}</Day>
      ))}
    </FilterRow>
    <TradeTabs>
      <TradeTab $active>Trades</TradeTab>
      <TradeTab>Summary</TradeTab>
      <TabTools>
        <SymbolFilter aria-label="Symbol filter" placeholder="Enter symbol filter" />
        <MoreButton>
          More options
          <svg width="6" height="6" viewBox="0 0 6 6"><circle cx="3" cy="3" r="2" fill="none" stroke="#444" strokeWidth="1.600" /></svg>
        </MoreButton>
      </TabTools>
    </TradeTabs>
    <TradeTable>
      <colgroup>{tradeColumns.map((c) => <Col key={c.name} $width={c.width} />)}</colgroup>
      <thead>
        <tr>{tradeColumns.map((c) => <th key={c.name}>{c.name}</th>)}</tr>
      </thead>
      <tbody>
        {trades.map((row) => {
          const cells = [...row.slice(0, 8), '', 'DU55353', '', row[8]];
          return (
            <tr key={row[7]}>
              {cells.map((cell, i) => <TradeCell key={i} $align={tradeColumns[i].align}>{cell}</TradeCell>)}
            </tr>
          );
        })}
      </tbody>
    </TradeTable>
  </TradesFrame>
);

const ControlCenter = () => (
  <ControlFrame>
    <TitleBar $tone="navy" $right={1}>
      <AppIcon />
      <TitleText>Control Center - Forex-Pairs</TitleText>
      <PenStrip />
      <Controls red wide />
    </TitleBar>
    <MenuBar $gap={11} $left={8} $bg="#fcfcfc">
      {['File', 'Tools', 'Help', '[+/-]'].map((item) => <MenuItem key={item} href="#">{item}</MenuItem>)}
    </MenuBar>
    <PageTabs>
      {['Orders', 'Strategies', 'Executions', 'Positions', 'Accounts', 'Account Performance', 'Log'].map((tab) => (
        <PageTab key={tab} $active={tab === 'Positions'}>{tab}</PageTab>
      ))}
    </PageTabs>
    <GridArea>
      <PositionTable>
        <thead>
          <tr>
            {['Instrument', 'Side', 'Qty', 'Avg Price', 'PnL', 'Account', 'Connection'].map((h) => <th key={h}>{h}</th>)}
          </tr>
        </thead>
        <tbody>
          {positions.map((row) => (
            <tr key={row[0]}>
              {row.map((cell, i) => (i === 4 ? <Pnl key={i}>{cell}</Pnl> : <td key={i}>{cell}</td>))}
            </tr>
          ))}
        </tbody>
      </PositionTable>
    </GridArea>
    <StatusBar>
      <Connected>Connected - InteractiveBrokers</Connected>
      <Loading>Loading data $EURUSD at 4/26/2011</Loading>
      <AbortButton>Abort</AbortButton>
      <svg width="7" height="7" viewBox="0 0 7 7"><path d="M5 1h1M3 3h1M5 3h1M1 5h1M3 5h1M5 5h1" stroke="#999" /></svg>
    </StatusBar>
  </ControlFrame>
);

const Trader = ({ id, ask, bid }) => (
  <OrderPanel>
    <CollapseButton aria-label="Collapse">
      <svg width="6" height="4" viewBox="0 0 6 4"><path d="M0 4l3-3.500L6 4z" fill="#111" /></svg>
    </CollapseButton>
    <OrderButtons>
      <OrderButton $tint="buy">BUY MARKET</OrderButton>
      <OrderButton $tint="sell">SELL MARKET</OrderButton>
      <OrderButton $tint="buy">BUY ASK</OrderButton>
      <OrderButton $tint="sell">SELL ASK</OrderButton>
      <OrderButton $tint="buy">BUY BID</OrderButton>
      <OrderButton $tint="sell">SELL BID</OrderButton>
      <OrderButton $tint="exit">REV</OrderButton>
      <OrderButton $tint="exit">CLOSE</OrderButton>
    </OrderButtons>
    <ExitRow>
      <OrderButton $tint="exit" $low>FLAT</OrderButton>
      <OrderButton $tint="exit" $low>ENTRY</OrderButton>
    </ExitRow>
    <PnlBar>PnL</PnlBar>
    <FieldRow $top={3}>
      <FieldLabel htmlFor={`${id}-account`} $flex="1">Account</FieldLabel>
      <FieldLabel htmlFor={`${id}-qty`} $flex="0 0 28px">Qty</FieldLabel>
    </FieldRow>
    <FieldRow>
      <SelectBox $grow><Select id={`${id}-account`} $height={11}><option>DU55353</option></Select></SelectBox>
      <QtyBox>
        <Qty id={`${id}-qty`} defaultValue="0.01M" />
        <svg width="7" height="9" viewBox="0 0 7 9"><rect width="7" height="9" fill="#e2e7f0" /><path d="M1.500 3.500l2-2 2 2zM1.500 5.500l2 2 2-2z" fill="#5d72a8" /></svg>
      </QtyBox>
    </FieldRow>
    <FieldRow $top={4}>
      <FieldLabel htmlFor={`${id}-atm`} $flex="1">ATM Strategy</FieldLabel>
      <DotsButton aria-label="Strategy settings">...</DotsButton>
    </FieldRow>
    <FieldRow>
      <SelectBox $grow><Select id={`${id}-atm`} $height={11}><option>&lt;None&gt;</option></Select></SelectBox>
    </FieldRow>
    <Quotes>
      <dt>A: {ask}</dt>
      <dd>1M</dd>
      <dt>B: {bid}</dt>
      <dd>1M</dd>
    </Quotes>
  </OrderPanel>
);

const ChartWindow = ({ chart, active, ask, bid }) => (
  <ChartFrame $fill={active}>
    <TitleBar $tone={active ? 'night' : 'light'} $right={1}>
      <AppIcon chart />
      <TitleText>{chart.symbol} (10 Min)&nbsp; 4/26/2011</TitleText>
      <PenStrip />
      {active && <Language>L</Language>}
      <Controls plain flat wide dark={!active} />
    </TitleBar>
    <Toolbar>
      <Divider />
      <SelectBox $small>
        <Select $plain aria-label="Instrument"><option>{chart.symbol}</option></Select>
      </SelectBox>
      <SelectBox $small>
        <Select $plain aria-label="Interval"><option>10 Min</option></Select>
      </SelectBox>
      <Divider />
      <IconButton aria-label="Chart style"><CandlesIcon /></IconButton>
      <Caret />
      <IconButton aria-label="Draw"><PencilIcon /></IconButton>
      <Caret />
      <IconButton aria-label="Zoom in"><LensIcon /></IconButton>
      <IconButton aria-label="Zoom out"><LensIcon off /></IconButton>
      <Divider />
      <IconButton aria-label="Crosshair"><CrossIcon /></IconButton>
      <Caret />
      <IconButton aria-label="Data box"><PageLensIcon /></IconButton>
      <Divider />
      <ToolGroup>
        <IconButton $on aria-label="Chart trader"><TraderIcon /></IconButton>
        <IconButton aria-label="Data series"><CandlesIcon /></IconButton>
        <IconButton aria-label="Indicators"><AreaIcon /></IconButton>
        <IconButton aria-label="Strategies"><DollarIcon /></IconButton>
        <IconButton aria-label="Properties"><PanelIcon /></IconButton>
      </ToolGroup>
    </Toolbar>
    <ChartBody>
      <ChartMain>
        <PriceChart chart={chart} />
        <ScrollTrack>
          <Arrow $dir="left" />
          <Thumb />
          <Arrow $dir="right" />
        </ScrollTrack>
      </ChartMain>
      <Trader id={chart.symbol.slice(1)} ask={ask} bid={bid} />
    </ChartBody>
  </ChartFrame>
);

const MarkerStrokes = () => (
  <Marker viewBox="0 0 1000 581" preserveAspectRatio="none" aria-hidden="true">
    <path d="M20 149L45 144H75L130 147L200 151L260 153L383 151H467C490 152 507 158 508 163C507 170 490 175 450 182C420 187 383 186 317 190H190L140 187L53 186L30 182C18 180 8 176 4 170C0 165 -2 155 2 152C7 149 12 148 17 148" />
    <path d="M262 250C240 254 228 258 222 267C217 277 218 288 225 297C232 309 240 313 252 319C265 324 290 324 317 324C340 324 349 322 356 314C366 304 373 298 373 288C373 276 364 268 355 263C345 259 339 254 325 252C310 248 305 251 298 250C275 249 258 251 246 255" />
    <path d="M789 155C792 151 799 151 801 156C803 163 800 167 797 171M797 180v.5" />
    <path d="M723 403C724 392 727 383 731 378C735 375 741 379 744 385C750 393 753 401 748 406C743 410 739 407 738 413C738 422 740 430 740 437L746 436M736 444L738 452M736 444C744 442 748 444 746 449C744 452 741 452 738 452L746 451" />
  </Marker>
);

export default function App() {
  return (
    <>
      <GlobalStyle />
      <Desktop>
        <Column>
          <TradesWindow />
          <ControlCenter />
        </Column>
        <Column>
          <ChartWindow chart={audChart} ask="87.9800" bid="0.0000" />
          <ChartWindow chart={cadChart} active ask="85.68" bid="85.66" />
        </Column>
        <MarkerStrokes />
      </Desktop>
    </>
  );
}
